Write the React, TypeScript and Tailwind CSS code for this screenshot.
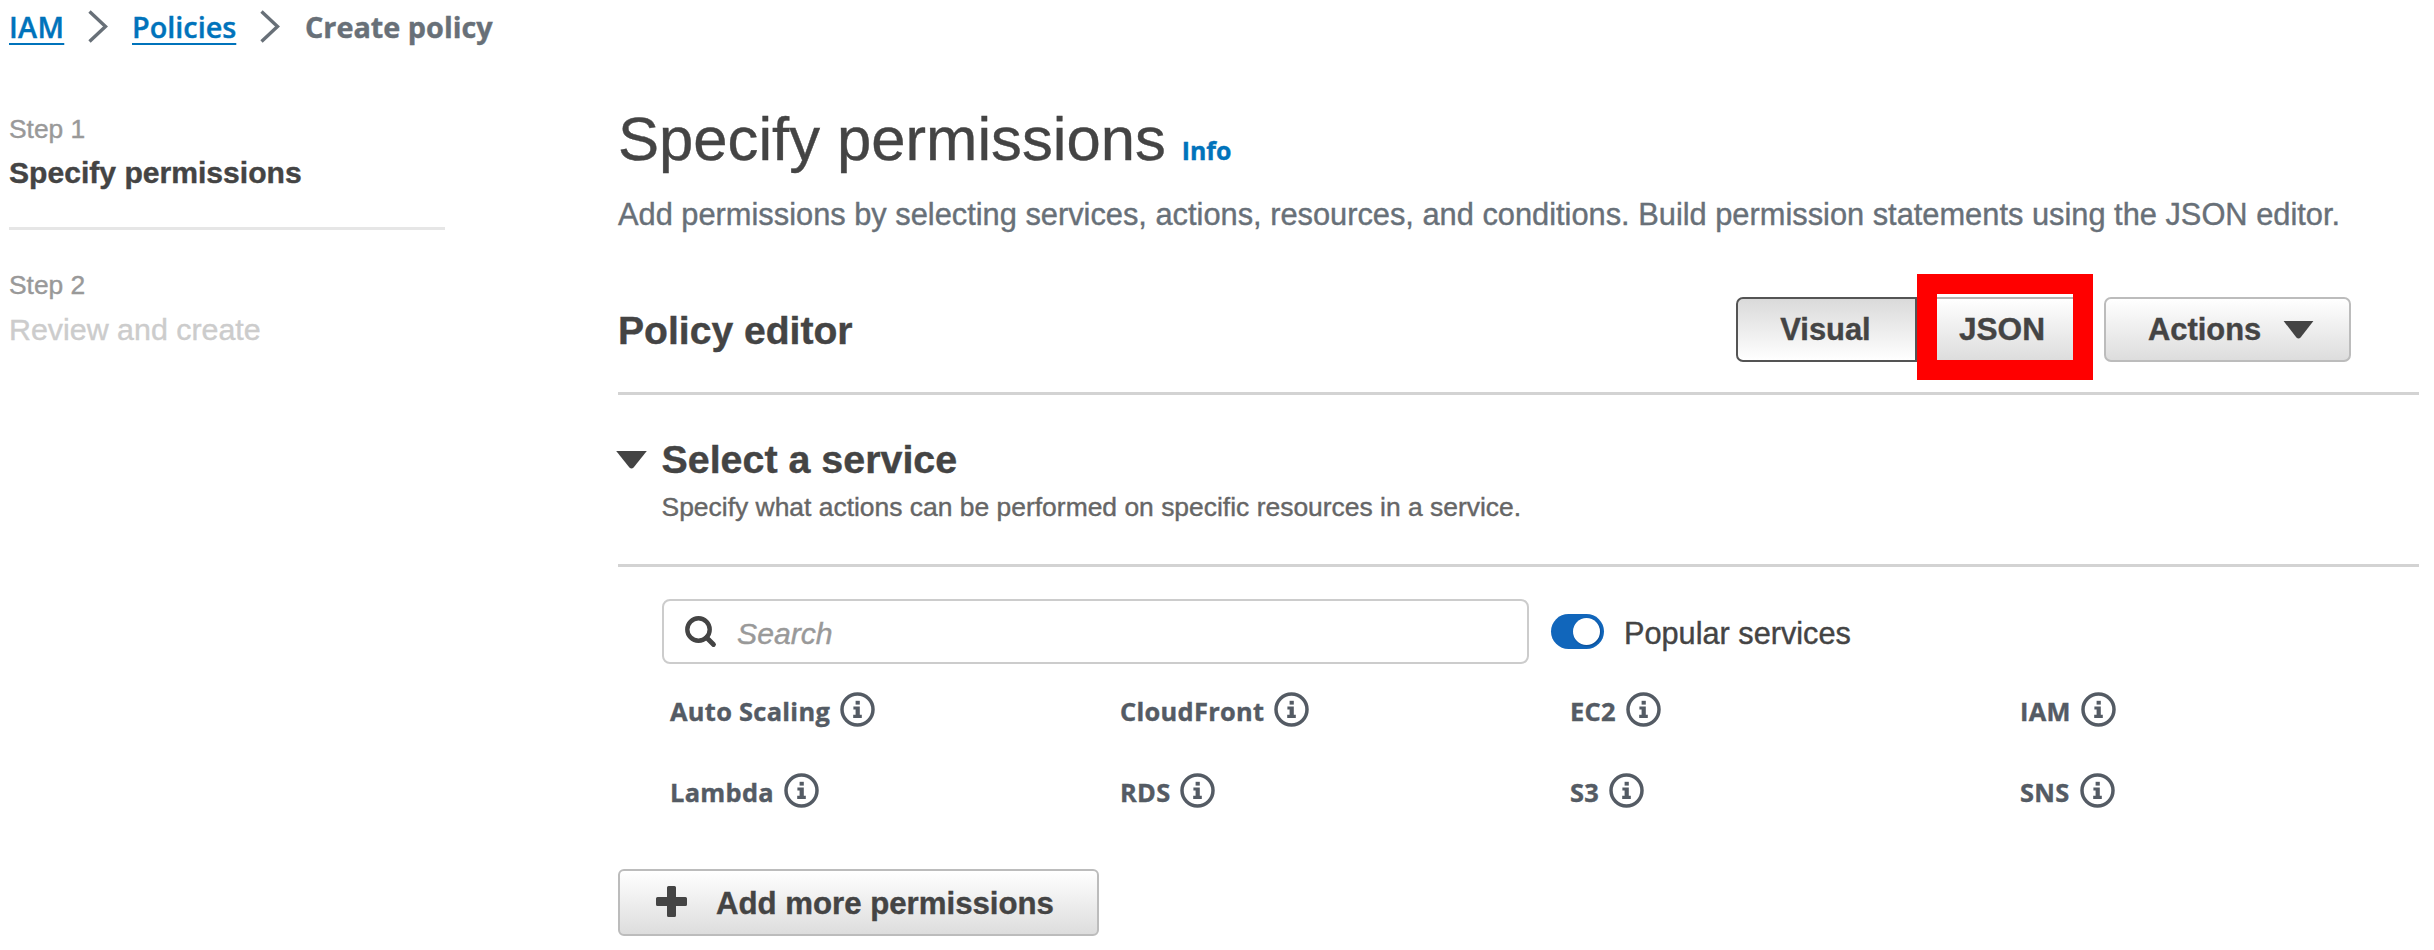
import type { ReactNode } from "react";

function Chevron() {
  return (
    <svg className="block shrink-0" width="20" height="34" viewBox="0 0 20 34" fill="none">
      <path d="M1.5 1.5 L17.5 16.5 L1.5 31.5" stroke="#687078" strokeWidth="3.4" />
    </svg>
  );
}

function InfoIcon() {
  return (
    <svg className="block shrink-0" width="35" height="35" viewBox="0 0 35 35" fill="none">
      <circle cx="17.5" cy="17.5" r="15.5" stroke="#545b64" strokeWidth="3.5" />
      <rect x="15.6" y="8.8" width="4.2" height="3.8" fill="#545b64" />
      <path d="M13.4 14.4 H19.8 V22.8 H21.8 V26 H13.2 V22.8 H15.6 V17.6 H13.4 Z" fill="#545b64" />
    </svg>
  );
}

function ServiceItem({ name }: { name: string }) {
  return (
    <div className="flex h-[35px] items-center gap-[10px]">
      <span className="relative top-[1.5px] font-['Open_Sans',sans-serif] text-[25.4px]/[36px] font-bold tracking-[0.3px] text-[#545b64]">
        {name}
      </span>
      <InfoIcon />
    </div>
  );
}

function Step({ label, children }: { label: string; children: ReactNode }) {
  return (
    <div>
      <div className="text-[26.4px]/[40px] text-[#999999]">{label}</div>
      {children}
    </div>
  );
}

const services = ["Auto Scaling", "CloudFront", "EC2", "IAM", "Lambda", "RDS", "S3", "SNS"];

export default function App() {
  return (
    <div className="h-[950px] w-[2434px] overflow-hidden bg-white font-['Liberation_Sans',Arial,sans-serif] text-[#444444] [-webkit-text-stroke:0.4px]">
      <nav className="flex h-[47px] items-start pt-[7px] pl-[9px] font-['Open_Sans',sans-serif] text-[28.8px]/[40px]">
        <a className="w-[79px] font-semibold tracking-[0.3px] whitespace-nowrap text-[#0073bb]">
          <span className="underline decoration-2 underline-offset-[5px]">IAM</span>
        </a>
        <div className="w-[44px] pt-[3px]"><Chevron /></div>
        <a className="w-[128px] font-semibold whitespace-nowrap text-[#0073bb]">
          <span className="underline decoration-2 underline-offset-[5px]">Policies</span>
        </a>
        <div className="w-[45px] pt-[3px]"><Chevron /></div>
        <span className="font-bold whitespace-nowrap text-[#687078]">Create policy</span>
      </nav>

      <div className="flex items-start">
        <aside className="ml-[9px] w-[436px] shrink-0 pt-[62px]">
          <Step label="Step 1">
            <div className="mt-[2px] text-[30.1px]/[44px] font-bold">Specify permissions</div>
          </Step>
          <hr className="mt-[32px] mb-[35px] h-[3px] border-0 bg-[#e6e6e6]" />
          <Step label="Step 2">
            <div className="mt-[2px] text-[30.4px]/[44px] text-[#cccccc]">Review and create</div>
          </Step>
        </aside>

        <main className="ml-[173px] w-[1801px] shrink-0 pt-[54px]">
          <div className="flex items-baseline">
            <h1 className="text-[61.6px]/[76px] whitespace-nowrap">Specify permissions</h1>
            <a className="ml-[16px] font-['Open_Sans',sans-serif] text-[24.9px]/[36px] font-bold text-[#0073bb]">Info</a>
          </div>
          <p className="mt-[16px] text-[30.8px]/[44px] whitespace-nowrap text-[#687078]">
            Add permissions by selecting services, actions, resources, and conditions. Build permission statements using the JSON editor.
          </p>

          <section>
            <div className="mt-[60px] flex h-[65px] items-center">
              <h2 className="relative top-px mr-auto text-[39.1px]/[50px] font-bold">Policy editor</h2>
              <div className="mr-[68px] flex text-[30.9px] font-bold">
                <button className="h-[65px] w-[181px] rounded-l-[7px] border-2 border-[#545454] bg-linear-to-b from-[#dadada] to-white pt-px pr-[2px]">
                  Visual
                </button>
                <div className="relative w-[176px]">
                  <button className="h-[65px] w-[170px] rounded-r-[7px] border-2 border-[#b4b4b4] bg-linear-to-b from-white to-[#dddddd] pt-px text-[31.6px]">
                    JSON
                  </button>
                  <div className="absolute -top-[23px] left-0 h-[106px] w-[176px] border-[20px] border-[#ff0000]" />
                </div>
                <button className="ml-[11px] flex h-[65px] w-[247px] items-center rounded-[7px] border-2 border-[#bcbcbc] bg-linear-to-b from-white to-[#dddddd] pt-px pl-[42px]">
                  Actions
                  <svg className="ml-[22px] block" width="31" height="18" viewBox="0 0 31 18">
                    <path d="M0.6 0 H30.4 L17.6 16.4 Q15.5 18.4 13.4 16.4 Z" fill="#444444" />
                  </svg>
                </button>
              </div>
            </div>
            <hr className="mt-[30px] h-[3px] border-0 bg-[#d3d3d3]" />
          </section>

          <section>
            <div className="-ml-[2px] flex pt-[39px]">
              <svg className="mt-[17px] block shrink-0" width="31" height="18" viewBox="0 0 31 18">
                <path d="M0.2 0 H30.8 L17.6 16.4 Q15.5 18.4 13.4 16.4 Z" fill="#444444" />
              </svg>
              <div className="ml-[14.5px]">
                <h2 className="text-[39.4px]/[50px] font-bold">Select a service</h2>
                <p className="mt-[5px] text-[26.45px]/[36px] text-[#666666]">
                  Specify what actions can be performed on specific resources in a service.
                </p>
              </div>
            </div>
            <hr className="mt-[39px] h-[3px] border-0 bg-[#d3d3d3]" />
          </section>

          <section className="pl-[44px]">
            <div className="mt-[32px] flex h-[65px] items-center">
              <div className="flex h-[65px] w-[867px] items-center rounded-[8px] border-2 border-[#cccccc] bg-white pl-[21px]">
                <svg className="block shrink-0" width="32" height="32" viewBox="0 0 32 32" fill="none">
                  <circle cx="13.5" cy="13.5" r="11.2" stroke="#444444" strokeWidth="4.4" />
                  <path d="M21.5 21.5 L28.5 28.5" stroke="#444444" strokeWidth="4.8" strokeLinecap="round" />
                </svg>
                <span className="relative top-[2px] ml-[20px] text-[30.2px]/[44px] text-[#999999] italic">Search</span>
              </div>
              <div className="ml-[22px] flex h-[35px] w-[53px] items-center justify-end rounded-full bg-[#1166bb] pr-[4px]">
                <div className="size-[27px] rounded-full bg-white shadow-[1px_1px_2px_0px_#0a4a90]" />
              </div>
              <span className="relative top-[2px] ml-[20px] text-[30.7px]/[44px]">Popular services</span>
            </div>
            <div className="mt-[28px] ml-[8px] grid grid-cols-[repeat(4,450px)] gap-y-[46px]">
              {services.map((name) => (
                <ServiceItem key={name} name={name} />
              ))}
            </div>
          </section>

          <button className="mt-[61px] flex h-[67px] w-[481px] items-center rounded-[6px] border-2 border-[#bcbcbc] bg-linear-to-b from-white to-[#dddddd] pb-[2px] pl-[36px] text-[31.2px]/[44px] font-bold">
            <svg className="block shrink-0" width="31" height="31" viewBox="0 0 31 31">
              <path
                d="M12.5 0 H18.5 Q20 0 20 1.5 V11 H29.5 Q31 11 31 12.5 V18.5 Q31 20 29.5 20 H20 V29.5 Q20 31 18.5 31 H12.5 Q11 31 11 29.5 V20 H1.5 Q0 20 0 18.5 V12.5 Q0 11 1.5 11 H11 V1.5 Q11 0 12.5 0 Z"
                fill="#444444"
              />
            </svg>
            <span className="relative top-[2px] ml-[29px]">Add more permissions</span>
          </button>
        </main>
      </div>
    </div>
  );
}
